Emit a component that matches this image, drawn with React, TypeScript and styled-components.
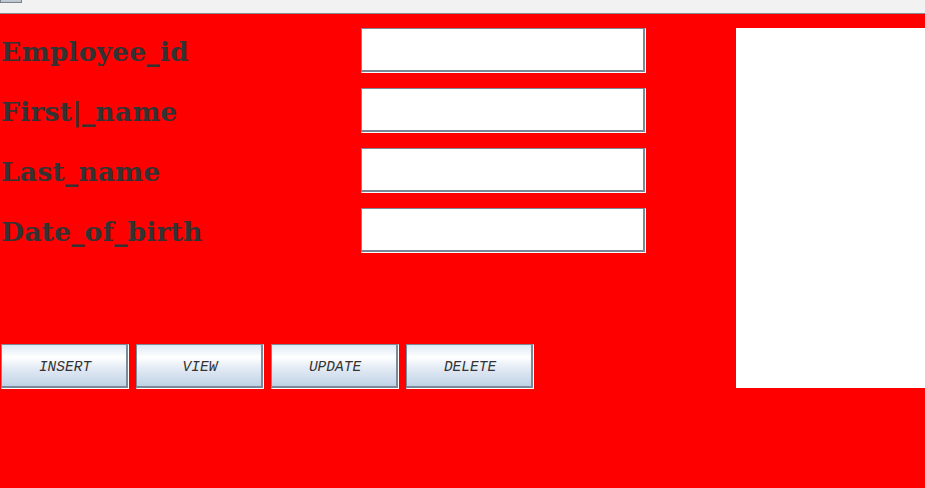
import React from "react";
import styled, { createGlobalStyle } from "styled-components";

const Global = createGlobalStyle`
  html, body { margin: 0; padding: 0; background: #ff0000; }
  body { width: 925px; height: 488px; overflow: hidden; }
`;

const Frame = styled.div`
  width: 925px;
  height: 488px;
  display: flex;
  flex-direction: column;
  background: #ff0000;
`;

const TitleBar = styled.div`
  height: 13px;
  background: #f2f2f2;
  border-bottom: 1px solid #8a8a8a;
  position: relative;
  flex: none;
`;

const TitleIcon = styled.div`
  position: absolute;
  left: 0;
  top: -6px;
  width: 20px;
  height: 8px;
  border: 1px solid #7a8390;
  border-top: none;
  background: linear-gradient(#e8ecf0, #b9c2cc);
`;

const Main = styled.div`
  flex: 1;
  display: flex;
  padding-top: 14px;
`;

const LeftPane = styled.div`
  width: 736px;
  display: flex;
  flex-direction: column;
`;

const Form = styled.div`
  display: grid;
  grid-template-columns: 360px 285px;
  row-gap: 15px;
  padding-left: 1px;
`;

const Label = styled.div`
  font-family: "DejaVu Serif", "Liberation Serif", serif;
  font-weight: bold;
  font-size: 26.5px;
  line-height: 45px;
  padding-top: 1px;
  height: 45px;
  box-sizing: border-box;
  color: #333333;
  white-space: nowrap;
  letter-spacing: 0.2px;
`;

const Field = styled.div`
  box-sizing: border-box;
  background: #ffffff;
  border-top: 1px solid #7a8a99;
  border-left: 1px solid #7a8a99;
  border-right: 1px solid #ffffff;
  border-bottom: 1px solid #ffffff;
  box-shadow: inset -2px -2px 0 #7a8a99, inset 1px 1px 0 #ffffff;
  height: 45px;
`;

const ButtonRow = styled.div`
  display: flex;
  gap: 7px;
  padding-left: 1px;
  margin-top: 91px;
`;

const Button = styled.button`
  width: 128px;
  height: 45px;
  box-sizing: border-box;
  padding: 0;
  margin: 0;
  border-top: 1px solid #7a8a99;
  border-left: 1px solid #7a8a99;
  border-right: 1px solid #ffffff;
  border-bottom: 1px solid #ffffff;
  box-shadow: inset -2px -2px 0 #7a8a99;
  background: linear-gradient(
    180deg,
    #dde8f3 0%,
    #ffffff 28%,
    #e2eaf4 55%,
    #bcd0e5 100%
  );
  font-family: "Liberation Mono", "Courier New", monospace;
  font-style: italic;
  font-size: 14.5px;
  color: #333333;
  cursor: pointer;
`;

const SidePanel = styled.div`
  flex: 1;
  height: 360px;
  background: #ffffff;
`;

const fields = ["Employee_id", "First|_name", "Last_name", "Date_of_birth"];
const buttons = ["INSERT", "VIEW", "UPDATE", "DELETE"];

export default function App() {
  return (
    <Frame>
      <Global />
      <TitleBar>
        <TitleIcon />
      </TitleBar>
      <Main>
        <LeftPane>
          <Form>
            {fields.map((f) => (
              <React.Fragment key={f}>
                <Label>{f}</Label>
                <Field />
              </React.Fragment>
            ))}
          </Form>
          <ButtonRow>
            {buttons.map((b) => (
              <Button key={b}>{b}</Button>
            ))}
          </ButtonRow>
        </LeftPane>
        <SidePanel />
      </Main>
    </Frame>
  );
}
